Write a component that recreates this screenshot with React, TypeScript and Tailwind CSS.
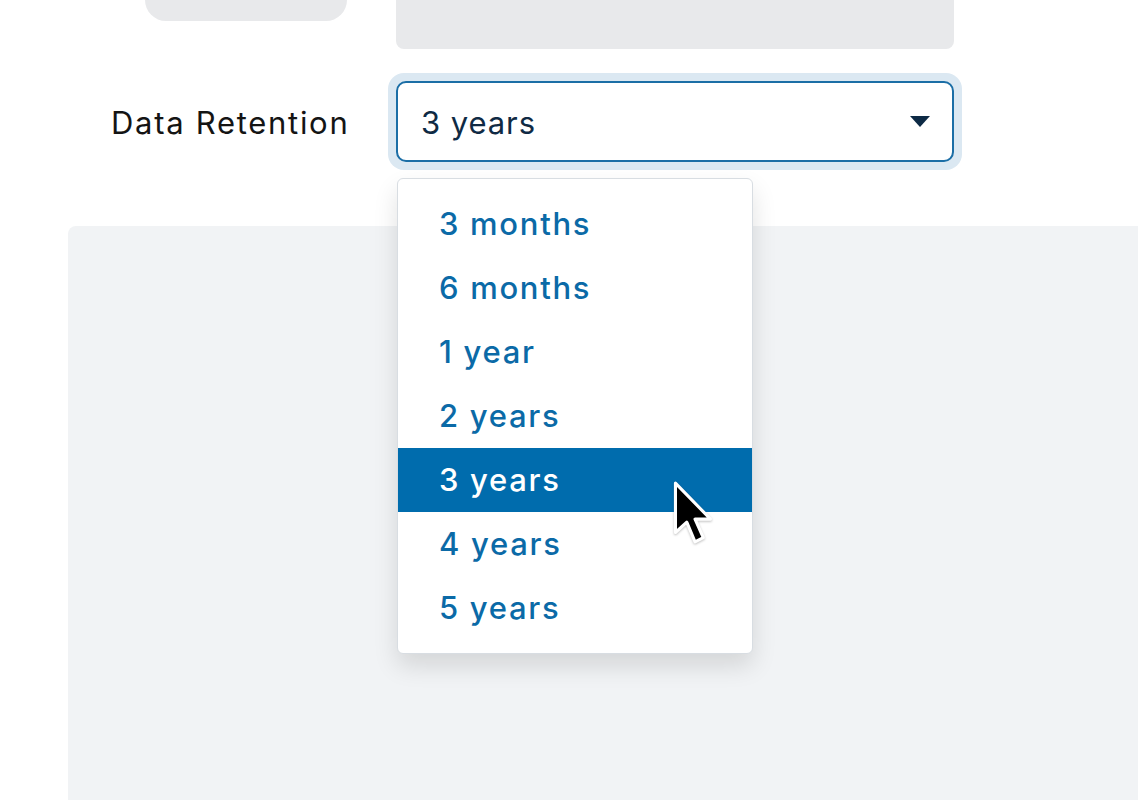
import React from 'react';

const options = ['3 months', '6 months', '1 year', '2 years', '3 years', '4 years', '5 years'];

function Caret() {
  return (
    <svg width="20" height="11" viewBox="0 0 20 11" className="shrink-0">
      <path d="M0 0 H20 L10 11 Z" fill="#0d2a45" />
    </svg>
  );
}

function Cursor() {
  return (
    <svg width="42" height="68" viewBox="0 0 40 66" className="drop-shadow-[0_1px_1px_rgba(0,0,0,0.25)]">
      <path
        d="M2 2 L2 50 L13 40 L21 59 L29 55 L21 37 L36 37 Z"
        fill="#000"
        stroke="#fff"
        strokeWidth="3"
        strokeLinejoin="round"
      />
    </svg>
  );
}

export default function App() {
  const selected = '3 years';

  return (
    <div className="relative flex h-[800px] w-full flex-col overflow-hidden bg-white font-['Inter','Noto_Sans',sans-serif]">
      {/* faded row above */}
      <div className="flex h-[49px] shrink-0">
        <div className="w-[396px] pl-[145px]">
          <div className="h-[21px] w-[202px] rounded-b-full bg-[#e8e9eb]" />
        </div>
        <div className="h-[49px] w-[558px] rounded-b-[8px] bg-[#e8e9eb]" />
      </div>

      {/* data retention row */}
      <div className="mt-[24px] flex shrink-0 items-center">
        <div className="w-[388px] pl-[111px] pt-[3px] text-[31px] tracking-[0.055em] text-[#141414]">Data Retention</div>
        <div className="h-[97px] w-[574px] rounded-[16px] bg-[#dbe8f2] p-[8px]">
          <div className="flex h-full items-center justify-between rounded-[10px] border-2 border-[#1b6ea6] bg-white pl-[23px] pr-[22px]">
            <span className="pt-[3px] text-[31px] tracking-[0.03em] text-[#0f2a44]">{selected}</span>
            <Caret />
          </div>
        </div>
      </div>

      {/* content panel */}
      <div className="ml-[68px] mt-[56px] flex-1 rounded-tl-[8px] bg-[#f1f3f5]" />

      {/* open menu */}
      <div className="absolute left-[397px] top-[178px] w-[356px] rounded-[6px] border border-[#d8dde2] bg-white py-[13px] shadow-[0_12px_24px_rgba(0,0,0,0.12)]">
        {options.map((o) => (
          <div
            key={o}
            className={
              o === selected
                ? 'flex h-[64px] items-center bg-[#006cad] pl-[41px] text-[31px] font-medium tracking-[0.055em] text-white'
                : 'flex h-[64px] items-center pl-[41px] text-[31px] font-medium tracking-[0.055em] text-[#0b6aa7]'
            }
          >
            {o}
          </div>
        ))}
      </div>

      <div className="absolute left-[673px] top-[481px]">
        <Cursor />
      </div>
    </div>
  );
}
